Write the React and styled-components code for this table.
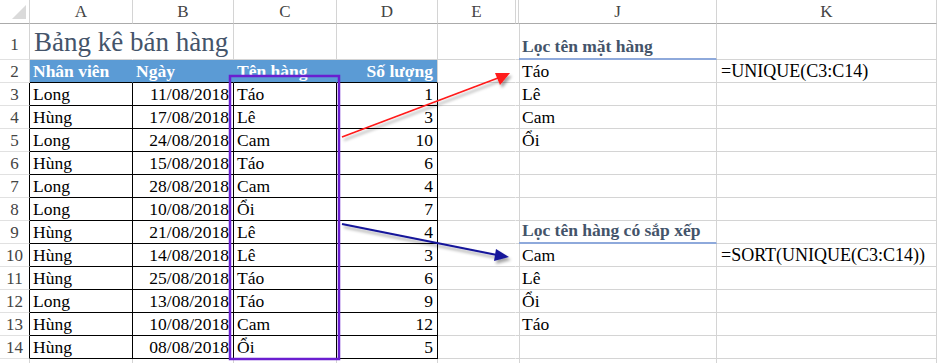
import React from "react";
import styled, { createGlobalStyle } from "styled-components";

const GlobalStyle = createGlobalStyle`
  html, body { margin: 0; padding: 0; background: #fff; }
  body { font-family: "Liberation Serif", "Times New Roman", serif; }
`;

const data = [
  ["Long", "11/08/2018", "Táo", 1],
  ["Hùng", "17/08/2018", "Lê", 3],
  ["Long", "24/08/2018", "Cam", 10],
  ["Hùng", "15/08/2018", "Táo", 6],
  ["Long", "28/08/2018", "Cam", 4],
  ["Long", "10/08/2018", "Ổi", 7],
  ["Hùng", "21/08/2018", "Lê", 4],
  ["Hùng", "14/08/2018", "Lê", 3],
  ["Hùng", "25/08/2018", "Táo", 6],
  ["Long", "13/08/2018", "Táo", 9],
  ["Hùng", "10/08/2018", "Cam", 12],
  ["Hùng", "08/08/2018", "Ổi", 5],
];

// J and K columns, keyed by row number
const sideCells = {
  1: { j: "Lọc tên mặt hàng", head: true },
  2: { j: "Táo", k: "=UNIQUE(C3:C14)" },
  3: { j: "Lê" },
  4: { j: "Cam" },
  5: { j: "Ổi" },
  9: { j: "Lọc tên hàng có sắp xếp", head: true },
  10: { j: "Cam", k: "=SORT(UNIQUE(C3:C14))" },
  11: { j: "Lê" },
  12: { j: "Ổi" },
  13: { j: "Táo" },
};

const GRID = "#d4d4d4";
const INK = "#000";

export default function App() {
  const rows = [];
  for (let r = 1; r <= 15; r++) {
    const d = r >= 3 && r <= 14 ? data[r - 3] : null;
    const side = sideCells[r] || {};

    rows.push(
      <RowHead key={`h${r}`} $right={d ? INK : GRID} $tall={r === 1}>
        {r < 15 ? r : ""}
      </RowHead>
    );

    if (r === 1) {
      rows.push(
        <Cell key="a1" $right="transparent">
          <Title>Bảng kê bán hàng</Title>
        </Cell>,
        <Cell key="b1" />,
        <Cell key="c1" />,
        <Cell key="d1" />
      );
    } else if (r === 2) {
      rows.push(
        <HeadCell key="a2">Nhân viên</HeadCell>,
        <HeadCell key="b2">Ngày</HeadCell>,
        <HeadCell key="c2">Tên hàng</HeadCell>,
        <HeadCell key="d2" $align="right" $last>Số lượng</HeadCell>
      );
    } else if (d) {
      rows.push(
        <Cell key={`a${r}`} $right={INK} $bottom={INK}>{d[0]}</Cell>,
        <Cell key={`b${r}`} $right={INK} $bottom={INK} $align="right">{d[1]}</Cell>,
        <Cell key={`c${r}`} $right={INK} $bottom={INK}>{d[2]}</Cell>,
        <Cell key={`d${r}`} $right={INK} $bottom={INK} $align="right">{d[3]}</Cell>
      );
    } else {
      rows.push(
        <Cell key={`a${r}`} />,
        <Cell key={`b${r}`} />,
        <Cell key={`c${r}`} />,
        <Cell key={`d${r}`} />
      );
    }

    rows.push(
      <Cell key={`e${r}`} $right="transparent" />,
      <Cell key={`x${r}`} />,
      side.head ? (
        <SubHead key={`j${r}`}>{side.j}</SubHead>
      ) : (
        <Cell key={`j${r}`}>{side.j}</Cell>
      ),
      <FormulaCell key={`k${r}`}>{side.k}</FormulaCell>
    );
  }

  return (
    <>
      <GlobalStyle />
      <Page>
        <Sheet>
          <Corner>
            <CornerMark />
          </Corner>
          {["A", "B", "C", "D", "E", "", "J", "K"].map((c, i) => (
            <ColHead key={i}>{c}</ColHead>
          ))}
          {rows}
        </Sheet>
        <Overlay width="937" height="363" viewBox="0 0 937 363">
          <defs>
            <filter id="sh" x="-10%" y="-10%" width="130%" height="140%">
              <feDropShadow dx="2" dy="3" stdDeviation="1.6" floodColor="#000" floodOpacity="0.35" />
            </filter>
          </defs>
          <rect x="230" y="76" width="109" height="283" fill="none" stroke="#6a1fd0" strokeWidth="2.5" />
          <g filter="url(#sh)">
            <line x1="342" y1="137" x2="498" y2="78" stroke="#ff1a1a" strokeWidth="1.6" />
            <polygon points="510,73 495,73 500,85" fill="#ff1a1a" />
          </g>
          <g filter="url(#sh)">
            <line x1="342" y1="224" x2="497" y2="255" stroke="#16169a" strokeWidth="1.8" />
            <polygon points="509,257 496,249 494,261" fill="#16169a" />
          </g>
        </Overlay>
      </Page>
    </>
  );
}

const Page = styled.div`
  position: relative;
  width: 937px;
  height: 363px;
  overflow: hidden;
  background: #fff;
`;

const Sheet = styled.div`
  display: grid;
  grid-template-columns: 30px 103px 101px 103px 101px 78px 3px 198px 1fr;
  grid-template-rows: 24px 36px repeat(14, 23px);
  font-family: "Liberation Serif", "Times New Roman", serif;
  font-size: 17.5px;
  color: #000;
`;

const Corner = styled.div`
  display: flex;
  align-items: flex-end;
  justify-content: flex-end;
  padding: 0 3px 4px 0;
  border-right: 1px solid ${GRID};
  border-bottom: 1px solid #ababab;
  box-sizing: border-box;
`;

const CornerMark = styled.span`
  width: 14px;
  height: 14px;
  background: #dadada;
  clip-path: polygon(100% 0, 100% 100%, 0 100%);
`;

const ColHead = styled.div`
  display: flex;
  align-items: center;
  justify-content: center;
  box-sizing: border-box;
  border-right: 1px solid ${GRID};
  border-bottom: 1px solid #ababab;
  color: #444;
  font-size: 17px;
  padding-top: 1px;
`;

const RowHead = styled.div`
  display: flex;
  align-items: flex-end;
  justify-content: center;
  box-sizing: border-box;
  border-right: 1px solid ${(p) => p.$right};
  border-bottom: 1px solid #e1e1e1;
  color: #444;
  font-size: 17px;
  line-height: 21px;
  padding-bottom: ${(p) => (p.$tall ? "4px" : "0")};
`;

const Cell = styled.div`
  display: flex;
  align-items: flex-end;
  justify-content: ${(p) => (p.$align === "right" ? "flex-end" : "flex-start")};
  box-sizing: border-box;
  border-right: 1px solid ${(p) => p.$right || GRID};
  border-bottom: 1px solid ${(p) => p.$bottom || GRID};
  padding: 0 ${(p) => (p.$align === "right" ? "4px" : "0")} 0 3px;
  line-height: 21px;
  white-space: nowrap;
  min-width: 0;
`;

const FormulaCell = styled(Cell)`
  padding-left: 4px;
  font-size: 18px;
`;

const HeadCell = styled(Cell)`
  background: #5b9bd5;
  color: #fff;
  font-weight: bold;
  border-right: 1px solid ${(p) => (p.$last ? GRID : "#5b9bd5")};
  border-bottom: 1px solid ${INK};
`;

const Title = styled.span`
  font-family: "Liberation Serif", "Times New Roman", serif;
  font-size: 27px;
  line-height: 33px;
  color: #44546a;
  padding-left: 1px;
`;

const SubHead = styled.div`
  display: flex;
  align-items: flex-end;
  box-sizing: border-box;
  border-right: 1px solid ${GRID};
  border-bottom: 2px solid #8ea9db;
  padding-left: 3px;
  line-height: 22px;
  padding-bottom: 1px;
  font-weight: bold;
  color: #44546a;
  white-space: nowrap;
`;

const Overlay = styled.svg`
  position: absolute;
  top: 0;
  left: 0;
  pointer-events: none;
`;
